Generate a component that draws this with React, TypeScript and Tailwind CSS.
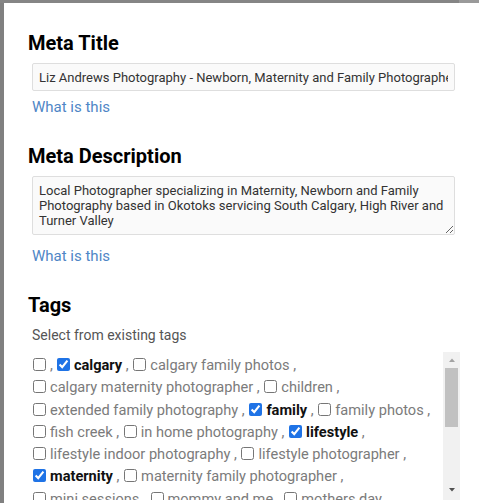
import React from "react";

type Tag = { label: string; checked?: boolean };

const rows: Tag[][] = [
  [{ label: "" }, { label: "calgary", checked: true }, { label: "calgary family photos" }],
  [{ label: "calgary maternity photographer" }, { label: "children" }],
  [
    { label: "extended family photography" },
    { label: "family", checked: true },
    { label: "family photos" },
  ],
  [{ label: "fish creek" }, { label: "in home photography" }, { label: "lifestyle", checked: true }],
  [{ label: "lifestyle indoor photography" }, { label: "lifestyle photographer" }],
  [{ label: "maternity", checked: true }, { label: "maternity family photographer" }],
  [{ label: "mini sessions" }, { label: "mommy and me" }, { label: "mothers day" }],
];

function TagItem({ tag }: { tag: Tag }) {
  return (
    <span>
      <input
        type="checkbox"
        defaultChecked={tag.checked}
        className="m-0 mr-1 ml-px inline-block h-[13px] w-[13px] align-[-1px] accent-[#1f73e6]"
      />
      {tag.label && (
        <span className={tag.checked ? "font-bold text-[#111]" : "text-[#7b7b7b]"}>{tag.label}</span>
      )}
      {tag.label ? (
        <span className="text-[#7b7b7b]"> , </span>
      ) : (
        <span className="mr-[3px] text-[#7b7b7b]">,</span>
      )}
    </span>
  );
}

function WhatIsThis({ className }: { className: string }) {
  return (
    <a href="#" className={"ml-1 block text-[15px] leading-5 text-[#4f86c6] " + className}>
      What is this
    </a>
  );
}

export default function App() {
  return (
    <div className="h-[503px] w-[479px] overflow-hidden bg-[#808080] font-['Roboto',_'Liberation_Sans',_sans-serif]">
      <div className="flex h-[3px]">
        <div className="w-[459px] bg-[#858585]" />
        <div className="flex-1 bg-[#9a9a9a]" />
      </div>
      <div className="ml-1 h-[500px] bg-white pl-6 pr-6 pt-7">
        <h2 className="text-[20px] font-bold leading-6 text-black">Meta Title</h2>
        <input
          readOnly
          defaultValue="Liz Andrews Photography - Newborn, Maternity and Family Photographer"
          className="ml-1 mt-2 block h-7 w-[423px] rounded-[2px] border border-[#dedede] bg-[#fafafa] px-[6px] text-[13px] text-[#333] outline-none"
        />
        <WhatIsThis className="mt-[6px]" />

        <h2 className="mt-[27px] text-[20px] font-bold leading-6 text-black">Meta Description</h2>
        <textarea
          readOnly
          defaultValue="Local Photographer specializing in Maternity, Newborn and Family Photography based in Okotoks servicing South Calgary, High River and Turner Valley"
          className="ml-1 mt-2 block h-[59px] w-[423px] rounded-[2px] border border-[#dedede] bg-[#fafafa] px-[6px] pt-[6px] text-[13px] leading-[15px] text-[#333] outline-none"
        />
        <WhatIsThis className="mt-[11px]" />

        <h2 className="mt-[27px] text-[20px] font-bold leading-6 text-black">Tags</h2>
        <p className="ml-1 mt-2 text-[14px] leading-5 text-[#555]">Select from existing tags</p>

        <div className="ml-1 mt-[7px] flex h-[148px] w-[428px] overflow-hidden">
          <div className="flex-1 pt-[2px] text-[14.6px] leading-[22.3px]">
            {rows.map((row, i) => (
              <div key={i} className="whitespace-nowrap">
                {row.map((tag, j) => (
                  <TagItem key={j} tag={tag} />
                ))}
              </div>
            ))}
          </div>
          <div className="flex w-[17px] flex-col items-center bg-[#f1f1f1]">
            <svg width="8" height="16" viewBox="0 0 8 16">
              <path d="M1 10 L4 6.5 L7 10 Z" fill="#a3a3a3" />
            </svg>
            <div className="h-[59px] w-[13px] bg-[#c1c1c1]" />
            <div className="flex-1" />
            <svg width="8" height="16" viewBox="0 0 8 16" className="mb-[2px]">
              <path d="M1 6 L4 9.5 L7 6 Z" fill="#505050" />
            </svg>
          </div>
        </div>
      </div>
    </div>
  );
}
